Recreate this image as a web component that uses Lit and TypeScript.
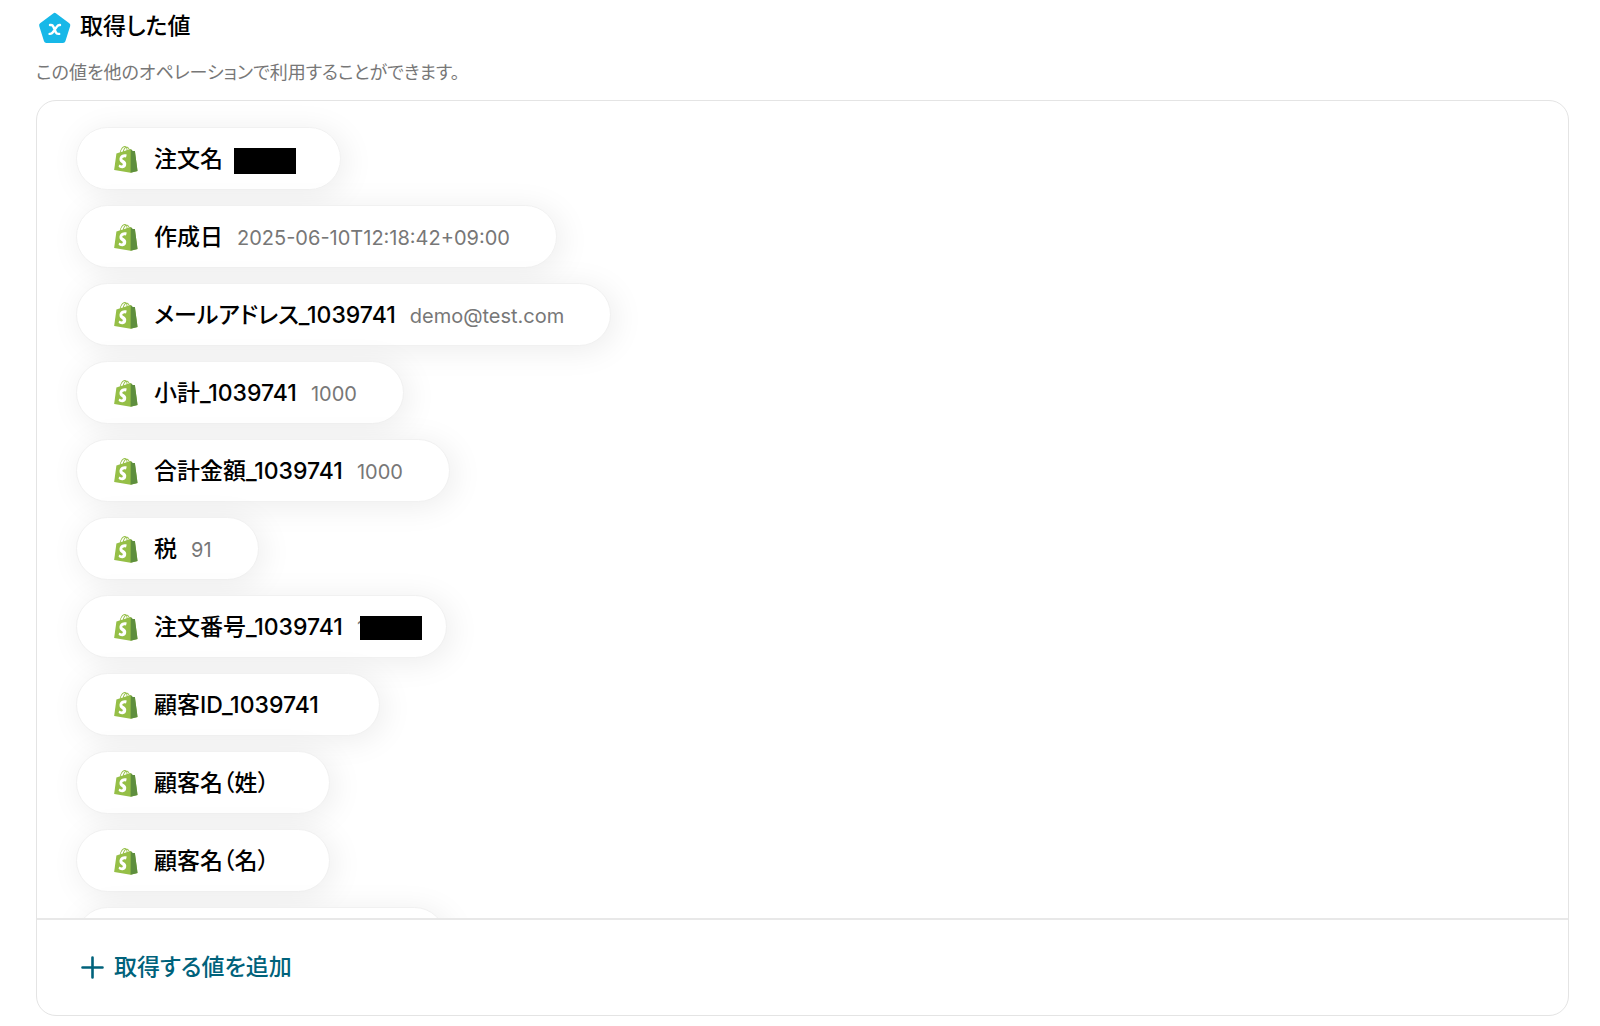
import { LitElement, html, css, svg, nothing } from "lit";
import { customElement, property } from "lit/decorators.js";

interface OutputValue {
  label: string;
  value?: string;
  masked?: "order-name" | "order-number";
}

const OUTPUT_VALUES: OutputValue[] = [
  { label: "注文名", masked: "order-name" },
  { label: "作成日", value: "2025-06-10T12:18:42+09:00" },
  { label: "メールアドレス_1039741", value: "demo@test.com" },
  { label: "小計_1039741", value: "1000" },
  { label: "合計金額_1039741", value: "1000" },
  { label: "税", value: "91" },
  { label: "注文番号_1039741", value: "1", masked: "order-number" },
  { label: "顧客ID_1039741" },
  { label: "顧客名（姓）" },
  { label: "顧客名（名）" },
  { label: "" },
];

const shopifyIcon = svg`
  <path fill="#95bf47" d="M95.9,23.9c-0.1-0.6-0.6-1-1.1-1c-0.5,0-9.3-0.2-9.3-0.2s-7.4-7.2-8.1-7.9c-0.7-0.7-2.2-0.5-2.7-0.3c0,0-1.4,0.4-3.7,1.1c-0.4-1.3-1-2.8-1.8-4.4c-2.6-5-6.5-7.7-11.1-7.7c-0.3,0-0.6,0-1,0.1c-0.1-0.2-0.3-0.3-0.4-0.5c-2-2.2-4.6-3.2-7.7-3.1c-6,0.2-12,4.5-16.8,12.2c-3.4,5.4-6,12.2-6.7,17.5c-6.9,2.1-11.7,3.6-11.8,3.7c-3.5,1.1-3.6,1.2-4,4.5c-0.3,2.5-9.5,72.9-9.5,72.9l75.6,13.1l32.6-8.1C108.4,115.8,96,24.5,95.9,23.9z M67.2,16.8c-1.8,0.5-3.8,1.2-5.9,1.8c0-3-0.4-7.3-1.8-10.9C64,8.6,66.2,13.7,67.2,16.8z M57.2,19.9c-4,1.2-8.4,2.6-12.8,3.9c1.2-4.7,3.6-9.4,6.4-12.5c1.1-1.1,2.6-2.4,4.3-3.2C56.9,11.6,57.3,16.5,57.2,19.9z M49.1,4.1c1.4,0,2.6,0.3,3.6,0.9c-1.6,0.8-3.2,2.1-4.7,3.6c-3.8,4.1-6.7,10.5-7.9,16.6c-3.6,1.1-7.2,2.2-10.5,3.2C31.7,18.8,39.8,4.4,49.1,4.1z"/>
  <path fill="#5e8e3e" d="M94.8,22.9c-0.5,0-9.3-0.2-9.3-0.2s-7.4-7.2-8.1-7.9c-0.3-0.3-0.6-0.4-1-0.5l-0.6,109.6l32.6-8.1S96,24.5,95.9,23.9C95.8,23.3,95.3,22.9,94.8,22.9z"/>
  <path fill="#fff" d="M58,39.9l-3.8,14.4c0,0-4.3-2-9.4-1.6c-7.5,0.5-7.5,5.2-7.5,6.4c0.4,6.4,17.3,7.8,18.3,22.9c0.7,11.9-6.3,20-16.4,20.6c-12.2,0.8-18.9-6.4-18.9-6.4l2.6-11c0,0,6.7,5.1,12.1,4.7c3.5-0.2,4.8-3.1,4.7-5.1c-0.5-8.4-14.3-7.9-15.2-21.7c-0.7-11.6,6.9-23.4,23.7-24.4C54.7,37.8,58,39.9,58,39.9z"/>`;

@customElement("value-pill")
export class ValuePill extends LitElement {
  @property({ attribute: false }) item!: OutputValue;

  static styles = css`
    .pill {
      display: flex;
      align-items: center;
      box-sizing: border-box;
      height: 63px;
      padding: 2px 46px 0 37px;
      border: 1px solid #f1f1f1;
      border-radius: 32px;
      background: #fff;
      box-shadow: 4px 4px 32px rgba(0, 0, 0, 0.08);
      white-space: nowrap;
    }
    .blank {
      min-width: 370px;
    }
    .icon {
      width: 24px;
      height: 27px;
      flex: none;
      margin-right: 16px;
    }
    .label {
      font-size: 23px;
      font-weight: 500;
      color: #000;
    }
    .value {
      position: relative;
      margin-left: 14px;
      font-size: 20px;
      color: #777;
    }
    .order-name {
      width: 57px;
      height: 26px;
    }
    .order-number {
      width: 43px;
    }
    .mask {
      position: absolute;
      width: 62px;
      background: #000;
    }
    .order-name .mask {
      top: 1px;
      left: -3px;
      height: 26px;
    }
    .order-number .mask {
      top: 0;
      left: 3px;
      height: 24px;
    }
  `;

  render() {
    const { label, value, masked } = this.item;
    return html`
      <div class="pill ${label ? "" : "blank"}">
        <svg class="icon" viewBox="0 0 109 125" aria-hidden="true">${shopifyIcon}</svg>
        <span class="label">${label}</span>
        <span class="value ${masked ?? ""}"
          >${value ?? nothing}${masked ? html`<span class="mask"></span>` : nothing}</span
        >
      </div>
    `;
  }
}

@customElement("app-root")
export class AppRoot extends LitElement {
  static styles = css`
    :host {
      display: block;
      padding: 8px 31px 11px 36px;
      background: #fff;
      color: #000;
      font-family: Inter, "Noto Sans CJK JP", sans-serif;
      font-feature-settings: "palt";
      line-height: 1.2;
    }
    .header {
      display: flex;
      align-items: flex-end;
      gap: 8px;
      height: 36px;
      padding-left: 2px;
    }
    .badge {
      width: 34px;
      height: 34px;
    }
    .title {
      margin: 0;
      font-size: 23px;
      line-height: 36px;
      font-weight: 500;
    }
    .note {
      margin: 15px 0 13px;
      font-size: 18px;
      line-height: 28px;
      color: #777;
    }
    .card {
      overflow: hidden;
      border: 1px solid #e4e4e4;
      border-radius: 20px;
    }
    .list {
      display: flex;
      flex-direction: column;
      align-items: flex-start;
      gap: 15px;
      max-height: 817px;
      box-sizing: border-box;
      margin: 0;
      padding: 26px 39px;
      list-style: none;
      overflow: auto;
      scrollbar-width: none;
    }
    .footer {
      padding: 24px 40px;
      border-top: 2px solid #e8e8e8;
    }
    .add {
      display: flex;
      align-items: center;
      gap: 9px;
      height: 47px;
      padding: 0 4px;
      border: 0;
      background: none;
      color: #00627b;
      font: inherit;
      font-feature-settings: inherit;
      font-size: 23px;
      font-weight: 500;
      cursor: pointer;
    }
    .plus {
      width: 24px;
      height: 24px;
    }
  `;

  render() {
    return html`
      <header class="header">
        <svg class="badge" viewBox="0 0 34 34" aria-hidden="true">
          <path
            fill="#17b8e8"
            stroke="#17b8e8"
            stroke-width="5"
            stroke-linejoin="round"
            d="M16.7 5.4 29.8 15.2 25 30.6H8.4L3.6 15.2Z"
          />
          <path
            fill="none"
            stroke="#fff"
            stroke-width="2.4"
            stroke-linecap="round"
            stroke-linejoin="round"
            d="M12 15h1c1.3 0 1.9.5 2.4 1.7l2.4 5.5c.5 1.2 1.1 1.7 2.4 1.7h1M22 15h-.4c-1.2 0-1.9.5-2.7 1.6l-4 5.7c-.8 1.1-1.5 1.6-2.7 1.6h-.6"
          />
        </svg>
        <h2 class="title">取得した値</h2>
      </header>
      <p class="note">この値を他のオペレーションで利用することができます。</p>
      <section class="card">
        <ul class="list">
          ${OUTPUT_VALUES.map((item) => html`<li><value-pill .item=${item}></value-pill></li>`)}
        </ul>
        <div class="footer">
          <button class="add" type="button">
            <svg class="plus" viewBox="0 0 24 24" aria-hidden="true">
              <path d="M11.5 1.5V21.5M1.5 11.5H21.5" stroke="currentColor" stroke-width="2.6" stroke-linecap="round" />
            </svg>
            取得する値を追加
          </button>
        </div>
      </section>
    `;
  }
}
